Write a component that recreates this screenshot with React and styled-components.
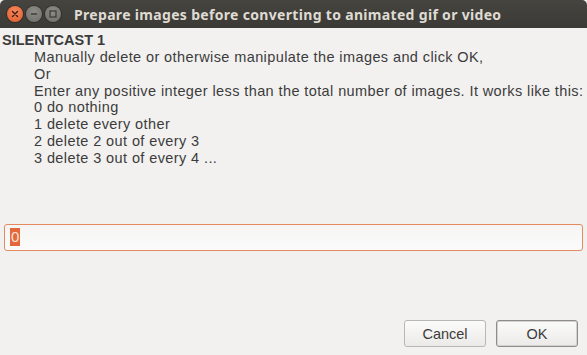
import React from 'react'
import styled, { createGlobalStyle } from 'styled-components'

const GlobalStyle = createGlobalStyle`
  html, body { margin:0; padding:0; background:#f2f1f0; }
  body { font-family: "Liberation Sans", Arial, sans-serif; }
`

const lines = [
  'Manually delete or otherwise manipulate the images and click OK,',
  'Or',
  'Enter any positive integer less than the total number of images. It works like this:',
  '0 do nothing',
  '1 delete every other',
  '2 delete 2 out of every 3',
  '3 delete 3 out of every 4 ...',
]

const App = () => {
  return (
    <Window>
      <GlobalStyle />
      <TitleBar>
        <Controls>
          <WinButton kind="close">
            <svg width="8" height="8" viewBox="0 0 8 8">
              <path d="M1.5 1.5 L6.5 6.5 M6.5 1.5 L1.5 6.5" stroke="#3a1a0e" strokeWidth="1.4" strokeLinecap="round" />
            </svg>
          </WinButton>
          <WinButton>
            <svg width="8" height="8" viewBox="0 0 8 8">
              <path d="M1 4 H7" stroke="#3a3935" strokeWidth="1.4" />
            </svg>
          </WinButton>
          <WinButton>
            <svg width="8" height="8" viewBox="0 0 8 8">
              <rect x="1" y="1" width="6" height="6" fill="none" stroke="#3a3935" strokeWidth="1.2" />
            </svg>
          </WinButton>
        </Controls>
        <Title>Prepare images before converting to animated gif or video</Title>
      </TitleBar>
      <Body>
        <Heading>SILENTCAST 1</Heading>
        <Message>
          {lines.map((l, i) => <Line key={i}>{l}</Line>)}
        </Message>
        <Field>
          <Selected>0</Selected>
        </Field>
        <Footer>
          <Button>Cancel</Button>
          <Button primary>OK</Button>
        </Footer>
      </Body>
    </Window>
  )
}

export default App

const Window = styled.div`
width:587px;
height:355px;
display:flex;
flex-direction:column;
background:#f2f1f0;
overflow:hidden;
`

const TitleBar = styled.div`
height:28px;
flex-shrink:0;
display:flex;
align-items:center;
background:linear-gradient(#45443f, #3b3a36);
border-radius:5px 5px 0 0;
`

const Controls = styled.div`
display:flex;
align-items:center;
gap:3px;
padding-left:7px;
width:67px;
`

const WinButton = styled.div`
width:16px;
height:16px;
border-radius:50%;
display:flex;
align-items:center;
justify-content:center;
background:${p => p.kind === 'close'
    ? 'radial-gradient(circle at 50% 35%, #f7895c, #e05a2a)'
    : 'radial-gradient(circle at 50% 35%, #8e8c86, #6e6c67)'};
box-shadow:0 0 0 1px rgba(0,0,0,0.25);
`

const Title = styled.div`
font-family:"Noto Sans", "DejaVu Sans", sans-serif;
color:#dfdbd2;
font-weight:bold;
font-size:14px;
letter-spacing:0.32px;
white-space:nowrap;
`

const Body = styled.div`
flex:1;
display:flex;
flex-direction:column;
padding:4px 4px 8px 2px;
color:#3c3c3c;
`

const Heading = styled.div`
font-weight:bold;
font-size:14.5px;
line-height:17px;
`

const Message = styled.div`
padding-left:32px;
font-size:14.5px;
letter-spacing:0.4px;
line-height:16.8px;
`

const Line = styled.div`
white-space:nowrap;
`

const Field = styled.div`
margin:57px 0 0 2px;
height:25px;
border:1px solid #e48a62;
border-radius:3px;
background:linear-gradient(#f6f5f4, #fbfbfb);
display:flex;
align-items:center;
padding-left:5px;
`

const Selected = styled.span`
background:#e3683b;
color:#fbe3d6;
font-size:15px;
line-height:18px;
padding:0 1px;
`

const Footer = styled.div`
margin-top:auto;
display:flex;
justify-content:flex-end;
gap:10px;
padding-right:5px;
`

const Button = styled.div`
width:80px;
height:25px;
display:flex;
align-items:center;
justify-content:center;
font-size:14.5px;
color:#3c3c3c;
border:1px solid ${p => p.primary ? '#8f8d89' : '#b9b7b2'};
border-radius:3px;
background:linear-gradient(#fbfbfa, #ebeae8);
box-shadow:${p => p.primary ? 'inset 0 0 0 1px #d4d2ce' : 'none'};
`
